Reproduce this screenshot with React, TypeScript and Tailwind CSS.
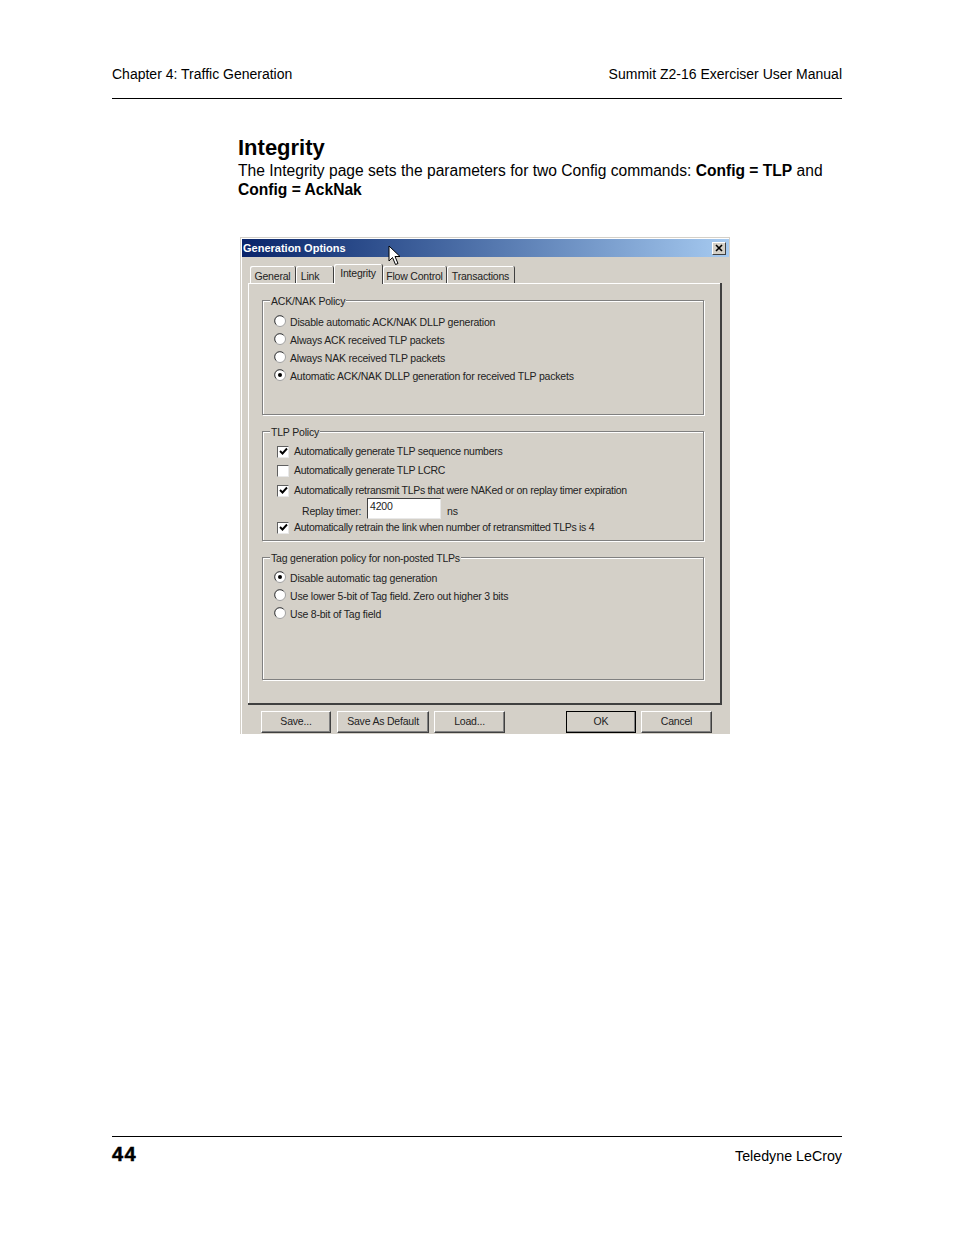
const etched = 'border border-[#808080] shadow-[inset_1px_1px_0_#fff,1px_1px_0_#fff]';

function Radio({ checked, label }: { checked?: boolean; label: string }) {
  return (
    <div className="flex h-[18px] items-center">
      <svg width="12" height="12" viewBox="0 0 12 12" className="mb-[2px] shrink-0">
        <circle cx="6" cy="6" r="5.5" fill="#fff" stroke="#a0a0a0" />
        <path d="M2.2 9.5A5 5 0 0 1 9.5 2.2" fill="none" stroke="#404040" />
        {checked && <circle cx="6" cy="6" r="2" fill="#000" />}
      </svg>
      <span className="ml-[4px] whitespace-nowrap">{label}</span>
    </div>
  );
}

function Check({ checked, label }: { checked?: boolean; label: string }) {
  return (
    <div className="flex items-center">
      <div className="flex h-[12px] w-[12px] shrink-0 items-center justify-center border border-t-[#606060] border-l-[#606060] border-r-[#e8e8e8] border-b-[#e8e8e8] bg-white">
        {checked && (
          <svg width="9" height="9" viewBox="0 0 9 9">
            <path d="M1 4l2.5 2.5L8 1.5" fill="none" stroke="#000" strokeWidth="1.9" />
          </svg>
        )}
      </div>
      <span className="ml-[5px] whitespace-nowrap tracking-[-0.29px]">{label}</span>
    </div>
  );
}

function Group({ title, className, children }: { title: string; className: string; children: React.ReactNode }) {
  return (
    <div className={`relative ${etched} ${className}`}>
      <span className="absolute left-[7px] top-[-6px] bg-[#d4d0c8] pl-px pr-px leading-[13px] whitespace-nowrap">{title}</span>
      {children}
    </div>
  );
}

function Tab({ label, className }: { label: string; className: string }) {
  return (
    <div className={`flex h-[17px] items-center justify-center rounded-t-[2px] border-r border-r-[#404040] pt-[3px] shadow-[inset_1px_1px_0_#fff] ${className}`}>
      {label}
    </div>
  );
}

function DlgButton({ label, className }: { label: string; className: string }) {
  return (
    <div className={`flex h-[22px] items-center justify-center border border-t-white border-l-white border-r-[#404040] border-b-[#404040] pb-[2px] shadow-[inset_-1px_-1px_0_#808080] ${className}`}>
      {label}
    </div>
  );
}

export default function App() {
  return (
    <div className="relative flex h-[1235px] w-[954px] flex-col justify-between bg-white px-[112px] font-['Liberation_Sans',Arial,sans-serif] text-black">
      <div>
        <div className="mt-[66px] flex h-[33px] items-start justify-between border-b border-black text-[14px] leading-[16px]">
          <span>Chapter 4: Traffic Generation</span>
          <span>Summit Z2-16 Exerciser User Manual</span>
        </div>

        <div className="ml-[126px]">
          <h1 className="mt-[35px] text-[22px] font-bold leading-[27px]">Integrity</h1>
          <p className="text-[15.6px] leading-[19px]">
            The Integrity page sets the parameters for two Config commands: <b>Config = TLP</b> and
            <br />
            <b>Config = AckNak</b>
          </p>
        </div>

        {/* dialog */}
        <div className="ml-[128px] mt-[38px] h-[497px] w-[490px] border-x border-t border-x-[#d4d0c8] border-t-[#d4d0c8] bg-[#d4d0c8] text-[10.5px] leading-[13px] tracking-[-0.2px] text-[#222] shadow-[inset_1px_1px_0_#fff]">
          <div className="ml-px mt-px flex h-[18px] items-center justify-between bg-gradient-to-r from-[#0a246a] to-[#a6caf0] pl-px pr-[3px]">
            <span className="text-[11px] font-bold tracking-normal text-white">Generation Options</span>
            <div className="flex h-[13px] w-[14px] items-center justify-center border border-t-white border-l-white border-r-[#404040] border-b-[#404040] bg-[#d4d0c8]">
              <svg width="8" height="8" viewBox="0 0 8 8">
                <path d="M1 1l6 6M7 1L1 7" stroke="#000" strokeWidth="1.6" />
              </svg>
            </div>
          </div>

          <div className="ml-[9px] mt-[8px] flex h-[18px] items-end">
            <Tab label="General" className="w-[46px]" />
            <Tab label="Link" className="w-[38px] pr-[9px]" />
            <div className="relative top-px z-10 flex h-[20px] w-[49px] items-start justify-center rounded-t-[2px] border-r border-r-[#404040] bg-[#d4d0c8] pt-[3px] shadow-[inset_1px_1px_0_#fff]">
              Integrity
            </div>
            <Tab label="Flow Control" className="w-[64px]" />
            <Tab label="Transactions" className="w-[68px]" />
          </div>

          <div className="ml-[7px] h-[422px] w-[474px] border-b-2 border-r-2 border-b-[#404040] border-r-[#404040] pl-[14px] pr-[12px] pt-[17px] shadow-[inset_1px_1px_0_#fff]">
            <Group title="ACK/NAK Policy" className="h-[115px] w-[442px] pl-[11px] pt-[12px]">
              <Radio label="Disable automatic ACK/NAK DLLP generation" />
              <Radio label="Always ACK received TLP packets" />
              <Radio label="Always NAK received TLP packets" />
              <Radio checked label="Automatic ACK/NAK DLLP generation for received TLP packets" />
            </Group>

            <Group title="TLP Policy" className="mt-[16px] h-[110px] w-[442px] pl-[14px] pt-[13px]">
              <Check checked label="Automatically generate TLP sequence numbers" />
              <div className="mt-[6px]">
                <Check label="Automatically generate TLP LCRC" />
              </div>
              <div className="mt-[7px]">
                <Check checked label="Automatically retransmit TLPs that were NAKed or on replay timer expiration" />
              </div>
              <div className="ml-[25px] mt-[1px] flex h-[21px] items-start">
                <span className="mt-[7px] w-[65px]">Replay timer:</span>
                <div className="h-[21px] w-[74px] border border-t-[#404040] border-l-[#404040] border-r-[#e8e8e8] border-b-[#e8e8e8] bg-white pl-[2px] pt-px">4200</div>
                <span className="ml-[6px] mt-[7px]">ns</span>
              </div>
              <div className="mt-[2px]">
                <Check checked label="Automatically retrain the link when number of retransmitted TLPs is 4" />
              </div>
            </Group>

            <Group title="Tag generation policy for non-posted TLPs" className="mt-[16px] h-[123px] w-[442px] pl-[11px] pt-[11px]">
              <Radio checked label="Disable automatic tag generation" />
              <Radio label="Use lower 5-bit of Tag field. Zero out higher 3 bits" />
              <Radio label="Use 8-bit of Tag field" />
            </Group>
          </div>

          <div className="ml-[20px] mt-[6px] flex">
            <DlgButton label="Save..." className="w-[70px]" />
            <DlgButton label="Save As Default" className="ml-[6px] w-[92px]" />
            <DlgButton label="Load..." className="ml-[5px] w-[71px]" />
            <DlgButton label="OK" className="ml-[61px] w-[70px] outline outline-1 -outline-offset-1 outline-black" />
            <DlgButton label="Cancel" className="ml-[5px] w-[71px]" />
          </div>
        </div>
      </div>

      <div className="mb-[66px] flex h-[33px] items-start justify-between border-t border-black">
        <span className="mt-[6px] text-[20px] font-bold leading-[22px] tracking-[1.5px] [-webkit-text-stroke:0.5px_black]">44</span>
        <span className="mt-[11px] text-[14.25px] leading-[16px]">Teledyne LeCroy</span>
      </div>

      {/* mouse pointer caught in the capture */}
      <svg className="absolute left-[388px] top-[245px]" width="13" height="21" viewBox="0 0 13 21">
        <path d="M1 1v15l3.5-3.5 3 7 2.5-1-3-7h5z" fill="#fff" stroke="#000" />
      </svg>
    </div>
  );
}
